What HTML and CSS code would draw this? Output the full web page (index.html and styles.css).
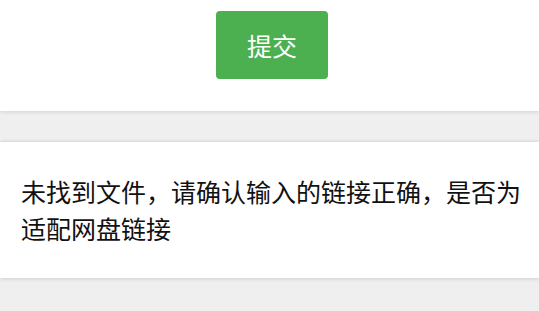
FILE: index.html
```html
<!DOCTYPE html>
<html lang="zh-CN">
<head>
<meta charset="utf-8">
<link rel="stylesheet" href="styles.css">
</head>
<body>
<section class="top">
  <button class="submit" type="button">提交</button>
</section>
<section class="card">
  <p class="msg">未找到文件<span class="fw">，</span>请确认输入的链接正确<span class="fw">，</span>是否为适配网盘链接</p>
</section>
</body>
</html>
```
FILE: styles.css
```css
html, body {
  margin: 0;
  padding: 0;
  background: #efefef;
  font-family: "Noto Sans CJK SC", "Noto Sans", sans-serif;
}
body {
  width: 539px;
  height: 311px;
  overflow: hidden;
}
.top {
  background: #fff;
  height: 111px;
  box-sizing: border-box;
  padding: 11px 0 0 216px;
  box-shadow: 0 1px 4px rgba(0, 0, 0, 0.12);
  position: relative;
  z-index: 1;
}
.submit {
  display: block;
  width: 112px;
  height: 68px;
  background: #4caf50;
  border: none;
  border-radius: 4px;
  color: #fff;
  font-family: "Noto Sans CJK SC", sans-serif;
  font-size: 25px;
  padding: 0;
  margin: 0;
}
.card {
  margin-top: 31px;
  background: #fff;
  height: 136px;
  box-sizing: border-box;
  padding: 31px 12px 0 21px;
  box-shadow: 0 1px 4px rgba(0, 0, 0, 0.12), 0 -1px 3px rgba(0, 0, 0, 0.08);
}
.msg {
  margin: 0;
  font-size: 25px;
  line-height: 37px;
  color: #111;
}
.fw {
  font-size: 25px;
}
```
